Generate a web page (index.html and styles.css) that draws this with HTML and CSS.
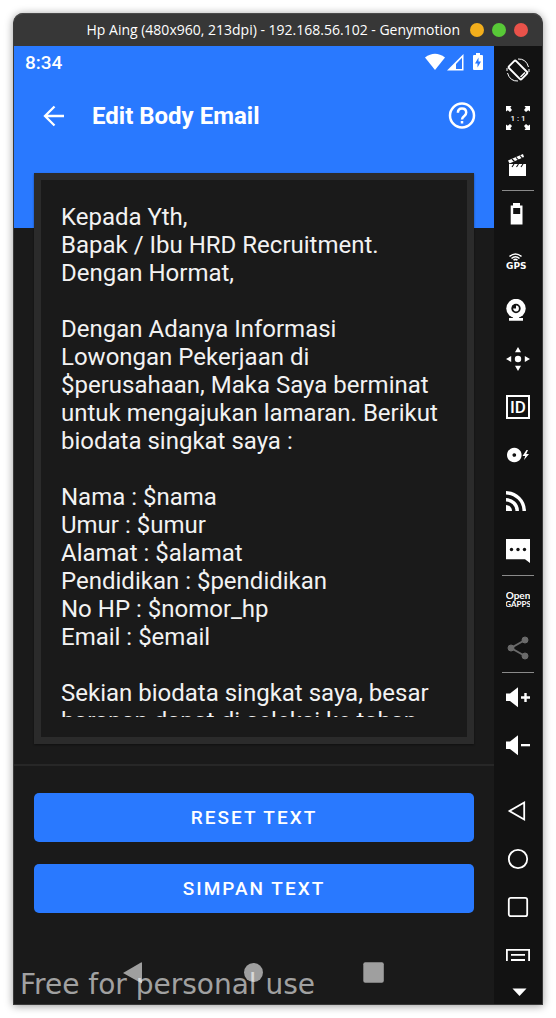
FILE: index.html
```
<!DOCTYPE html>
<html lang="id">
<head>
<meta charset="utf-8">
<meta name="viewport" content="width=device-width, initial-scale=1">
<title>Edit Body Email</title>
<link rel="stylesheet" href="styles.css">
</head>
<body>
<div class="window">
  <header class="titlebar">
    <span class="titlebar-text">Hp Aing (480x960, 213dpi) - 192.168.56.102 - Genymotion</span>
    <div class="window-controls">
      <button class="dot dot-min" aria-label="Minimize"></button>
      <button class="dot dot-max" aria-label="Maximize"></button>
      <button class="dot dot-close" aria-label="Close"></button>
    </div>
  </header>
  <div class="emulator">
    <main class="screen">
      <div class="app-header">
        <div class="statusbar">
          <span>8:34</span>
          <svg class="status-icons" viewBox="0 0 60 18" aria-hidden="true">
            <path fill="#fff" d="M0 4.500Q10 -3 20 4.500L10 17Z"/>
            <path fill="#fff" fill-rule="evenodd" d="M22 17.500L38.500 1V17.500ZM31 16H37V4.800L31 11Z"/>
            <path fill="#fff" fill-rule="evenodd" d="M51 0H55V2H57Q58 2 58 3V16Q58 17 57 17H49Q48 17 48 16V3Q48 2 49 2H51ZM53.500 4.500L50 10.500H52.500V14.500L56 8.500H53.500Z"/>
          </svg>
        </div>
        <div class="toolbar">
          <button class="icon-button" aria-label="Back">
            <svg width="24" height="24" viewBox="0 0 24 24" fill="none" stroke="#fff" stroke-width="2.300"><path d="M22 12H3.500M12.500 2.500L3 12L12.500 21.500"/></svg>
          </button>
          <h1 class="title">Edit Body Email</h1>
          <button class="icon-button" aria-label="Help">
            <svg width="28" height="28" viewBox="0 0 28 28" fill="none" stroke="#fff" stroke-width="2.500"><circle cx="14" cy="13.500" r="12"/><path d="M9.900 10.800Q9.900 6.500 14 6.500Q18.200 6.500 18.200 10.500Q18.200 12.200 16.500 13.700Q14 15.700 14 17.500"/><path d="M14 19V21.500"/></svg>
          </button>
        </div>
      </div>
      <div class="card">
        <textarea class="body-text" aria-label="Body Email" spellcheck="false">Kepada Yth,
Bapak / Ibu HRD Recruitment.
Dengan Hormat,

Dengan Adanya Informasi Lowongan Pekerjaan di $perusahaan, Maka Saya berminat untuk mengajukan lamaran. Berikut biodata singkat saya :

Nama : $nama
Umur : $umur
Alamat : $alamat
Pendidikan : $pendidikan
No HP : $nomor_hp
Email : $email

Sekian biodata singkat saya, besar harapan dapat di seleksi ke tahap</textarea>
      </div>
      <div class="actions">
        <button class="action">RESET TEXT</button>
        <button class="action">SIMPAN TEXT</button>
      </div>
      <nav class="android-nav">
        <button aria-label="Back"><svg width="22" height="22" viewBox="0 0 22 22"><path fill="#9f9f9f" d="M0 11L18 .5Q19 0 19 1V20.500Q19 21.500 18 21Z"/></svg></button>
        <button aria-label="Home"><svg width="22" height="22" viewBox="0 0 22 22"><circle cx="10.500" cy="10.500" r="9.500" fill="#9f9f9f"/></svg></button>
        <button aria-label="Recents"><svg width="22" height="22" viewBox="0 0 22 22"><rect x=".300" y=".300" width="20.500" height="20.500" rx="2" fill="#9f9f9f"/></svg></button>
      </nav>
      <span class="watermark">Free for personal use</span>
    </main>
    <aside class="rail">
      <button aria-label="Rotate"><svg viewBox="0 0 24 24" fill="none" stroke="#fff"><rect x="7" y="3" width="10" height="18" rx="1.500" stroke-width="1.900" transform="rotate(-45 12 12)"/><path d="M14.500 19L19 14.500" stroke-width="1.500"/><path d="M12 1Q20 .5 22.500 9M23 11V14M12 23Q4 23.500 1.500 15M1 13V10"/></svg></button>
      <button aria-label="Pixel perfect"><svg viewBox="0 0 24 24" fill="#fff"><path d="M0 0H5.500L4.300 1.800L6 4L4 6L1.800 4.300L0 5.500Z"/><path d="M24 0H18.500L19.700 1.800L18 4L20 6L22.200 4.300L24 5.500Z"/><path d="M0 24H5.500L4.300 22.200L6 20L4 18L1.800 19.700L0 18.500Z"/><path d="M24 24H18.500L19.700 22.200L18 20L20 18L22.200 19.700L24 18.500Z"/><text x="12" y="15" text-anchor="middle" class="t-ratio">1 : 1</text></svg></button>
      <button aria-label="Capture"><svg viewBox="0 0 24 24" fill="#fff"><path d="M3 10H20V22H3Z"/><path d="M2 6.500L17 0L18 3L3.500 9.500Z"/><path stroke="#121212" stroke-width="1.100" d="M6 5L8.500 7.500M10 3.300L12.500 6M14 1.500L16.500 4.300M8 10L6 13M12.500 10L10.500 13M17 10L15 13"/></svg></button>
      <hr>
      <button aria-label="Battery"><svg viewBox="0 0 24 24"><path fill="#fff" fill-rule="evenodd" d="M7 0H14V2.500H16.500V21.500H4.700V2.500H7ZM7.200 5V11H14.200V5Z"/></svg></button>
      <button aria-label="GPS"><svg viewBox="0 0 24 24" fill="none" stroke="#fff" stroke-width="1.500"><path d="M3.500 5.500Q9.500 .5 15.500 5.500M5.500 7.500Q9.500 4 13.500 7.500M7.500 9.300Q9.500 7.500 11.500 9.300"/><text x="0" y="18" class="t-gps">GPS</text></svg></button>
      <button aria-label="Camera"><svg viewBox="0 0 24 24"><circle cx="10" cy="9.500" r="9.700" fill="#fff"/><path fill="#fff" d="M7 17H13V19H17V21.700H3V19H7Z"/><circle cx="10" cy="9.500" r="3.800" fill="none" stroke="#121212" stroke-width="1.800"/><path fill="#121212" d="M10 6V9.500H6.500V6Z"/></svg></button>
      <button aria-label="Motion"><svg viewBox="0 0 24 24" fill="#fff"><circle cx="12" cy="12" r="3.200"/><path d="M12 0L15 5.200H9ZM12 24L9 18.800H15ZM0 12L5.200 9V15ZM24 12L18.800 15V9Z"/></svg></button>
      <button aria-label="Identifiers"><svg viewBox="0 0 24 24"><rect x="1" y="1" width="22" height="22" fill="none" stroke="#fff" stroke-width="2"/><text x="12" y="18" text-anchor="middle" class="t-id">ID</text></svg></button>
      <button aria-label="Disk"><svg viewBox="0 0 24 24" fill="#fff"><path fill-rule="evenodd" d="M8.300 4.700a7.300 7.300 0 1 0 .01 0ZM8.300 10.200a1.800 1.800 0 1 1-.01 0Z"/><path d="M20.500 7L16.500 13H19.200L18 17L23 11H20.200L22 7Z"/></svg></button>
      <button aria-label="Network"><svg viewBox="0 0 24 24" fill="none" stroke="#fff" stroke-width="3.500"><path d="M0 1.800A18.200 18.200 0 0 1 18.200 20M0 8.800A11.200 11.200 0 0 1 11.200 20"/><path fill="#fff" stroke="none" d="M0 14A6 6 0 0 1 6 20H0Z"/></svg></button>
      <button aria-label="Phone"><svg viewBox="0 0 24 24"><path fill="#fff" d="M0 0H24V24L19 20.300H0Z"/><circle cx="5.500" cy="10.500" r="1.700" fill="#121212"/><circle cx="12" cy="10.500" r="1.700" fill="#121212"/><circle cx="18.500" cy="10.500" r="1.700" fill="#121212"/></svg></button>
      <hr>
      <button aria-label="Open GApps"><svg viewBox="0 0 24 24"><text x="12" y="11" text-anchor="middle" class="t-open">Open</text><text x="12" y="19" text-anchor="middle" class="t-gapps">GAPPS</text></svg></button>
      <button aria-label="Share"><svg viewBox="0 0 24 24" fill="#6a6a6a" stroke="#6a6a6a"><path fill="none" stroke-width="2" d="M19 4L5 12L19 20"/><circle cx="5" cy="12" r="3"/><circle cx="19" cy="4" r="3"/><circle cx="19" cy="20" r="3"/></svg></button>
      <hr>
      <button aria-label="Volume up"><svg viewBox="0 0 24 24" fill="#fff"><path d="M0 8.500H4L12 2.200V22.300L4 16H0Z"/><path d="M18.300 8H20.700V11.300H24V13.700H20.700V17H18.300V13.700H15V11.300H18.300Z"/></svg></button>
      <button aria-label="Volume down"><svg viewBox="0 0 24 24" fill="#fff"><path d="M0 8.500H4L12 2.200V22.300L4 16H0Z"/><path d="M15 11H24V13.300H15Z"/></svg></button>
      <div class="rail-bottom">
        <button aria-label="Back"><svg viewBox="0 0 24 24" fill="none" stroke="#fff" stroke-width="1.800"><path d="M18.200 3.500V20.500L3.500 12Z"/></svg></button>
        <button aria-label="Home"><svg viewBox="0 0 24 24" fill="none" stroke="#fff" stroke-width="1.800"><circle cx="12" cy="12" r="9.200"/></svg></button>
        <button aria-label="Recents"><svg viewBox="0 0 24 24" fill="none" stroke="#fff" stroke-width="1.800"><rect x="2.800" y="2.800" width="18.400" height="18.400" rx="2"/></svg></button>
        <button aria-label="Menu"><svg viewBox="0 0 24 24" fill="none" stroke="#fff" stroke-width="1.800"><path d="M.9 18V6.900H23.100V18M5 11.900H19M5 17H19"/></svg></button>
        <button class="more" aria-label="More"><svg viewBox="0 0 24 24"><path fill="#fff" d="M6.500 8.500H20.500L13.500 16Z"/></svg></button>
      </div>
    </aside>
  </div>
</div>
</body>
</html>
```
FILE: styles.css
```
* {
  box-sizing: border-box;
}

body {
  margin: 0;
  padding: 13px;
  min-height: 100vh;
  display: flex;
  background: #fff;
  font-family: Roboto, "Liberation Sans", sans-serif;
  color: #fff;
}

button {
  padding: 0;
  border: 0;
  background: none;
  color: inherit;
  font: inherit;
}

svg {
  display: block;
}

.window {
  flex: 1;
  min-width: 0;
  display: flex;
  flex-direction: column;
  border: 1px solid #3a3a3a;
  border-top: 0;
  border-radius: 10px 10px 0 0;
  background: #373737;
  box-shadow: 0 1px 8px rgba(0, 0, 0, 0.4);
}

.titlebar {
  height: 33px;
  padding-right: 14px;
  display: flex;
  align-items: center;
  justify-content: flex-end;
  gap: 10px;
  border-top: 1px solid #4a4a4a;
  border-radius: 10px 10px 0 0;
}

.titlebar-text {
  font: 500 14px/20px "Open Sans", sans-serif;
  white-space: nowrap;
}

.window-controls {
  display: flex;
  gap: 8px;
}

.dot {
  width: 14px;
  height: 14px;
  border-radius: 50%;
}

.dot-min {
  background: #f2ae1c;
}

.dot-max {
  background: #58c837;
}

.dot-close {
  background: #e9524a;
}

.emulator {
  flex: 1;
  display: flex;
}

.screen {
  position: relative;
  flex: 1;
  min-width: 0;
  display: flex;
  flex-direction: column;
  background: #1a1a1a;
}

.app-header {
  padding-bottom: 74px;
  background: #2979ff;
}

.statusbar {
  height: 32px;
  padding: 0 9px 0 11px;
  display: flex;
  align-items: center;
  justify-content: space-between;
  font-size: 19px;
  font-weight: 500;
}

.status-icons {
  width: 60px;
  height: 18px;
}

.toolbar {
  height: 76px;
  padding: 0 18px 0 28px;
  display: flex;
  align-items: center;
}

.title {
  flex: 1;
  margin: 0 0 0 26px;
  font-size: 24px;
  line-height: 32px;
  font-weight: 700;
}

.card {
  flex: 1;
  display: flex;
  margin: -55px 20px 20px;
  padding: 23px 20px 20px;
  border: 7px solid #2b2b2b;
  background: #1a1a1a;
  box-shadow: 0 1px 2px rgba(0, 0, 0, 0.4);
}

.body-text {
  flex: 1;
  min-width: 0;
  min-height: 280px;
  padding: 0;
  border: 0;
  outline: 0;
  resize: none;
  overflow: hidden;
  background: transparent;
  color: #f2f2f2;
  font: 400 24px/28px Roboto, sans-serif;
}

.actions {
  padding: 27px 20px 28px;
  display: flex;
  flex-direction: column;
  gap: 22px;
  border-top: 2px solid #272727;
}

.action {
  height: 49px;
  border-radius: 5px;
  background: #2979ff;
  font-size: 19px;
  font-weight: 500;
  letter-spacing: 2px;
}

.android-nav {
  height: 63px;
  padding: 0 60px;
  display: grid;
  grid-template-columns: repeat(3, 1fr);
}

.android-nav button {
  display: grid;
  place-items: center;
}

.watermark {
  position: absolute;
  left: 6px;
  bottom: 3px;
  color: rgba(255, 255, 255, 0.6);
  font: 28px/32px "DejaVu Sans", sans-serif;
  white-space: nowrap;
  pointer-events: none;
}

.rail {
  width: 48px;
  display: flex;
  flex-direction: column;
  background: #121212;
}

.rail button {
  width: 48px;
  height: 48px;
  display: grid;
  place-items: center;
}

.rail svg {
  width: 24px;
  height: 24px;
}

.rail hr {
  width: 32px;
  height: 1px;
  margin: 0 auto;
  border: 0;
  background: #8a8a8a;
}

.rail-bottom {
  margin-top: auto;
}

.rail .more {
  height: 25px;
}

.rail text {
  fill: #fff;
  stroke: none;
}

.t-ratio {
  font: 500 8px Roboto, sans-serif;
}

.t-gps {
  font: 700 9px "DejaVu Sans", sans-serif;
}

.t-id {
  font: 500 17px Roboto, sans-serif;
}

.t-open {
  font: 700 10px Lato, sans-serif;
}

.t-gapps {
  font: 700 8px Lato, sans-serif;
}
```
